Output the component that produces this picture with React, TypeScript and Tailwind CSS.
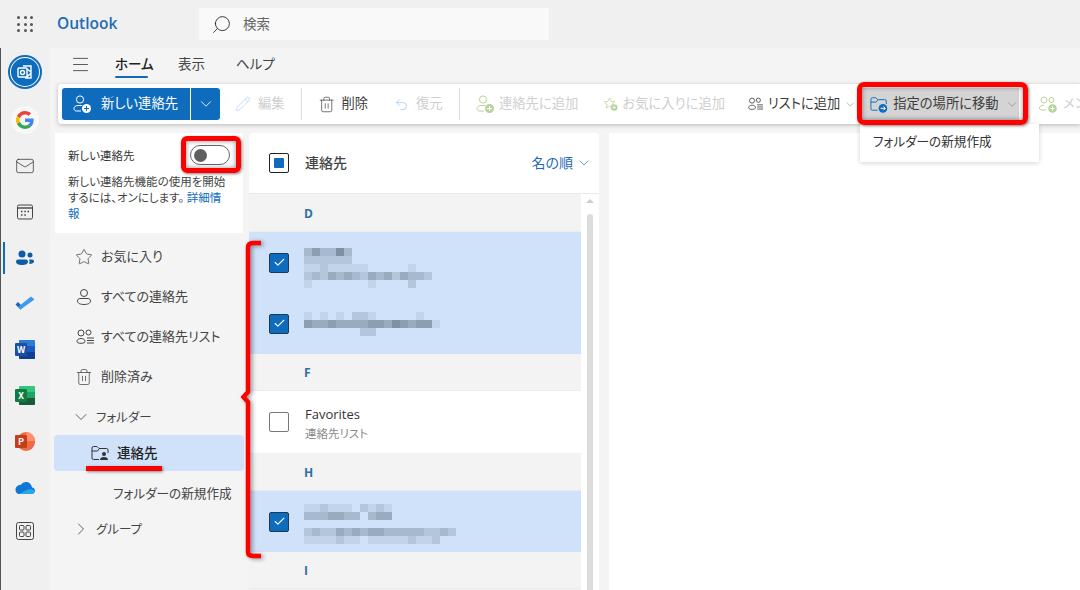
import React from "react";
import { ChevronDown, ChevronRight, Star, Trash2, Undo2, Pencil, Search, Menu, Mail, Check } from "lucide-react";

const FONT = "font-['Noto_Sans_CJK_JP','Noto_Sans',sans-serif] [font-feature-settings:'palt']";

const PersonAdd = ({ c = "#333", plus = "#0f6cbd", cross = "#fff" }: { c?: string; plus?: string; cross?: string }) => (
  <svg width="20" height="20" viewBox="0 0 20 20" fill="none">
    <circle cx="8" cy="5.5" r="3.6" stroke={c} />
    <path d="M9 17H4.5C3 17 2 16 2 14.6c0-1.900 1.700-3.100 4-3.100h4" stroke={c} />
    <circle cx="14.500" cy="14.500" r="4.500" fill={plus} />
    <path d="M14.500 12v5M12 14.500h5" stroke={cross} />
  </svg>
);

const StarAdd = ({ c = "#b9d29a" }: { c?: string }) => (
  <svg width="20" height="20" viewBox="0 0 20 20" fill="none">
    <path d="M8.500 2l2 4.600 5 .5-3.800 3.300 1.100 4.900-4.300-2.600-4.300 2.600 1.100-4.900L1.500 7.100l5-.5z" stroke={c} />
    <circle cx="14.500" cy="14.500" r="4.300" fill={c} />
    <path d="M14.500 12.300v4.400M12.300 14.500h4.400" stroke="#fff" />
  </svg>
);

const PeopleList = ({ c = "#444" }: { c?: string }) => (
  <svg width="20" height="20" viewBox="0 0 20 20" fill="none" stroke={c}>
    <circle cx="6" cy="6" r="3" />
    <path d="M2 14.500c0-2 1.600-3 4-3s4 1 4 3c0 1-1 1.800-4 1.800S2 15.500 2 14.500z" />
    <circle cx="13.500" cy="5.500" r="2.500" />
    <path d="M12 11h7M12 13.500h7M12 16h7" />
  </svg>
);

const PeopleAdd = ({ c = "#b9d29a" }: { c?: string }) => (
  <svg width="20" height="20" viewBox="0 0 20 20" fill="none" stroke={c}>
    <circle cx="6" cy="6" r="3" />
    <circle cx="13.500" cy="6" r="2.500" />
    <path d="M8 16H4c-1.500 0-2.500-.7-2.500-2 0-1.800 2-2.800 4.500-2.800" />
    <circle cx="14.500" cy="14.500" r="4.300" fill={c} stroke="none" />
    <path d="M14.500 12.300v4.400M12.300 14.500h4.400" stroke="#fff" />
  </svg>
);

const FolderBase = ({ children, c = "#444" }: { children: React.ReactNode; c?: string }) => (
  <svg width="20" height="20" viewBox="0 0 20 20" fill="none">
    <path d="M9 16.500H3.500A1.500 1.500 0 0 1 2 15V5a1.500 1.500 0 0 1 1.500-1.500H7L9 5.500h7.500A1.500 1.500 0 0 1 18 7v3M2 8h5.500L9 6" stroke={c} />
    {children}
  </svg>
);

const Mosaic = ({ rows, w = 8, h = 8 }: { rows: string[]; w?: number; h?: number }) => (
  <svg width={rows[0].length * w} height={rows.length * h} className="block">
    {rows.map((r, y) =>
      r.split("").map((ch, x) =>
        ch === "." ? null : <rect key={x + "-" + y} x={x * w} y={y * h} width={w} height={h} fill="#4a5a6b" opacity={Number(ch) / 10} />
      )
    )}
  </svg>
);

const Box = ({ checked, partial }: { checked?: boolean; partial?: boolean }) => (
  <div className={`flex h-5 w-5 shrink-0 items-center justify-center rounded-[2px] border ${checked ? "border-[#1c3a55] bg-[#0f6cbd]" : partial ? "border-[#222] bg-white" : "border-[#777] bg-white"}`}>
    {checked && <Check size={13} color="#fff" strokeWidth={2} />}
    {partial && <div className="h-[10px] w-[10px] rounded-[1px] bg-[#0f6cbd]" />}
  </div>
);

const RailIcon = ({ children, active }: { children: React.ReactNode; active?: boolean }) => (
  <div className="relative flex h-[46px] w-full items-center justify-center">
    {active && <div className="absolute left-[2px] top-[7px] h-[32px] w-[2px] bg-[#0f6cbd]" />}
    {children}
  </div>
);

const OfficeTile = ({ letter, bg, children }: { letter: string; bg: string; children: React.ReactNode }) => (
  <div className="relative h-[20px] w-[20px]">
    {children}
    <div className={`absolute left-0 top-[3px] flex h-[13px] w-[12px] items-center justify-center rounded-[1px] text-[9px] font-bold leading-none text-white ${bg}`}>{letter}</div>
  </div>
);

const NavRow = ({ icon, label }: { icon: React.ReactNode; label: string }) => (
  <div className="flex h-10 items-center text-[13px] text-[#444]">
    <div className="ml-[25px] flex w-[26px] items-center">{icon}</div>
    <span className="-translate-y-px">{label}</span>
  </div>
);

const Head = ({ t, h }: { t: string; h: string }) => (
  <div className={`flex items-center border-b border-[#ececec] pl-[55px] pt-[2px] text-[12px] font-bold text-[#2f6ea8] font-['Open_Sans',sans-serif] ${h}`}>{t}</div>
);

const Tool = ({ icon, label, off, ml, w, gap = "gap-[6px]", chev }: { icon: React.ReactNode; label: string; off?: boolean; ml: string; w?: string; gap?: string; chev?: boolean }) => (
  <div className={`flex shrink-0 items-center ${gap} ${ml} ${w ?? ""} text-[13.3px] ${off ? "text-[#cfcfcf]" : "text-[#3b3b3b]"}`}>
    {icon}
    <span className="-translate-y-px whitespace-nowrap">{label}</span>
    {chev && <ChevronDown size={15} strokeWidth={1} color="#777" className="ml-auto" />}
  </div>
);

export default function App() {
  return (
    <div className={`relative flex h-[590px] w-[1080px] flex-col overflow-hidden bg-[#f3f3f3] ${FONT}`}>
      {/* top bar */}
      <div className="flex h-12 shrink-0 items-center bg-[#f0f0f0]">
        <div className="ml-[17px] grid grid-cols-3 gap-[3.5px]">
          {Array.from({ length: 9 }).map((_, i) => (
            <div key={i} className="h-[3px] w-[3px] rounded-full bg-[#555]" />
          ))}
        </div>
        <div className="ml-[24px] w-[59px] text-[15.5px] font-semibold text-[#1f6cb5] font-['Open_Sans',sans-serif]">Outlook</div>
        <div className="ml-[83px] flex h-8 w-[350px] items-center bg-[#f9f9f9] pl-[12px] text-[13.5px] text-[#666]">
          <Search size={21} strokeWidth={1} color="#222" className="-scale-x-100" />
          <span className="ml-[11px] -translate-y-px">検索</span>
        </div>
      </div>

      <div className="flex min-h-0 flex-1">
        {/* rail */}
        <div className="flex w-[50px] shrink-0 flex-col items-center border-l border-[#555] bg-[#f0f0f0] pr-px">
          <div className="flex h-[48px] items-center justify-center">
            <div className="flex h-[34px] w-[34px] items-center justify-center rounded-full border-2 border-[#0f6cbd] bg-white p-[1px]">
              <div className="flex h-full w-full items-center justify-center rounded-full bg-[#0f6cbd]">
                <svg width="18" height="18" viewBox="0 0 18 18" fill="none" stroke="#fff" strokeWidth="1.4">
                  <rect x="2" y="5" width="9" height="9" rx="1" />
                  <circle cx="6.500" cy="9.500" r="2" />
                  <path d="M7 3h8v12H9M11 6l4 3M11 14l4-4" />
                </svg>
              </div>
            </div>
          </div>
          <div className="flex h-[47px] items-center justify-center">
            <div className="flex h-7 w-7 items-center justify-center rounded-full bg-[#f8f8f8]">
              <svg width="18" height="18" viewBox="0 0 48 48">
                <path fill="#EA4335" d="M24 9.500c3.500 0 6.700 1.200 9.200 3.600l6.900-6.900C35.900 2.400 30.500 0 24 0 14.600 0 6.500 5.400 2.600 13.200l8 6.200C12.500 13.700 17.800 9.500 24 9.500z" />
                <path fill="#4285F4" d="M47 24.500c0-1.600-.1-3.100-.4-4.500H24v9h12.900c-.6 3-2.200 5.500-4.700 7.200l7.700 6c4.500-4.200 7.100-10.300 7.100-17.700z" />
                <path fill="#FBBC05" d="M10.500 28.600A14.500 14.500 0 0 1 10.500 19.400l-8-6.200a24 24 0 0 0 0 21.600z" />
                <path fill="#34A853" d="M24 48c6.500 0 11.900-2.100 15.900-5.800l-7.700-6c-2.200 1.400-5 2.300-8.200 2.300-6.200 0-11.500-4.200-13.400-9.900l-8 6.200C6.500 42.600 14.600 48 24 48z" />
              </svg>
            </div>
          </div>
          <RailIcon><Mail size={20} strokeWidth={1} color="#444" /></RailIcon>
          <RailIcon>
            <svg width="18" height="18" viewBox="0 0 18 18" fill="none" stroke="#444">
              <rect x="1.500" y="2" width="15" height="14" rx="1.500" />
              <path d="M1.500 5h15" strokeWidth="1.4" />
              <path d="M5 8.500h1.500M8.300 8.500h1.500M11.600 8.500h1.500M5 12h1.500M8.300 12h1.500" strokeWidth="1.4" />
            </svg>
          </RailIcon>
          <RailIcon active>
            <svg width="20" height="20" viewBox="0 0 20 20" fill="#0f5ba8">
              <circle cx="7" cy="6" r="3.500" />
              <path d="M1 13.500c0-1.200 1-2 2-2h8c1 0 2 .8 2 2 0 2.500-2.500 3.500-6 3.500s-6-1-6-3.500z" />
              <circle cx="15" cy="7" r="2.500" />
              <path d="M14 16c.7-1 .8-3 0-4.500h3c1 0 2 .7 2 1.800 0 1.700-2 2.700-5 2.700z" />
            </svg>
          </RailIcon>
          <RailIcon>
            <svg width="20" height="20" viewBox="0 0 20 20">
              <path d="M0.500 10.500l2.500-2.500 5 5-2.500 2.500z" fill="#1f5fc0" />
              <path d="M5.500 15.500l-2.500-2.500L16 2.500l3.500 3z" fill="#3f9be8" />
            </svg>
          </RailIcon>
          <RailIcon>
            <OfficeTile letter="W" bg="bg-[#1a4fa8]">
              <div className="absolute right-0 top-0 h-[19px] w-[16px] overflow-hidden rounded-[1px] bg-[#2b7cd3]">
                <div className="mt-[6px] h-[6px] bg-[#185abd]" />
                <div className="h-[7px] bg-[#103f91]" />
              </div>
            </OfficeTile>
          </RailIcon>
          <RailIcon>
            <OfficeTile letter="X" bg="bg-[#107c41]">
              <div className="absolute right-0 top-0 h-[19px] w-[16px] overflow-hidden rounded-[1px] bg-[#33c481]">
                <div className="mt-[6px] h-[6px] bg-[#21a366]" />
                <div className="h-[7px] bg-[#185c37]" />
              </div>
            </OfficeTile>
          </RailIcon>
          <RailIcon>
            <OfficeTile letter="P" bg="bg-[#c43e1c]">
              <div className="absolute right-0 top-0 h-[19px] w-[18px] rounded-full bg-[#ed6c47]">
                <div className="absolute right-0 top-0 h-[9px] w-[9px] rounded-tr-full bg-[#ff8f6b]" />
              </div>
            </OfficeTile>
          </RailIcon>
          <RailIcon>
            <svg width="20" height="14" viewBox="0 0 20 14">
              <path d="M4 13h12c2.200 0 4-1.300 4-3.300 0-1.800-1.400-3-3-3.200C16.500 3 13.800 1 11 1 8.800 1 7 2.100 6 3.800 3 3.800.5 6 .5 9c0 2.300 1.500 4 3.500 4z" fill="#0f78d4" />
              <path d="M4 13h12c2.200 0 4-1.300 4-3.300-3-2-6-2-9-.5l-7 3.800z" fill="#28a8ea" />
            </svg>
          </RailIcon>
          <div className="-mt-[3px]">
            <RailIcon>
              <svg width="20" height="20" viewBox="0 0 20 20" fill="none" stroke="#444">
                <rect x="1.500" y="1.500" width="17" height="17" rx="2" />
                <rect x="4.500" y="4.500" width="4.500" height="4.500" rx="1" />
                <rect x="11" y="4.500" width="4.500" height="4.500" rx="1" />
                <rect x="4.500" y="11" width="4.500" height="4.500" rx="1" />
                <rect x="11" y="11" width="4.500" height="4.500" rx="1" />
              </svg>
            </RailIcon>
          </div>
        </div>

        {/* main */}
        <div className="flex min-w-0 flex-1 flex-col bg-[#f4f4f4]">
          {/* tabs */}
          <div className="flex h-9 shrink-0 items-center text-[13.5px] text-[#444]">
            <Menu size={21} strokeWidth={1} color="#444" className="ml-[20px] -translate-y-[2px]" />
            <div className="relative ml-[24px] w-[33px] whitespace-nowrap font-medium text-[#222]">
              <span className="relative -top-[3px]">ホーム</span>
              <div className="absolute bottom-[-2px] left-0 right-0 h-[2.5px] rounded bg-[#0f6cbd]" />
            </div>
            <div className="relative -top-[3px] ml-[30px]">表示</div>
            <div className="relative -top-[3px] ml-[31px]">ヘルプ</div>
          </div>

          {/* toolbar */}
          <div className="ml-2 flex h-10 shrink-0 items-center overflow-hidden rounded-l bg-white pl-1 shadow-[0_1px_4px_rgba(0,0,0,0.25)]">
            <div className="flex h-8 w-[158px] shrink-0 overflow-hidden rounded-[3px] bg-[#0f6cbd] text-[13.3px] text-white">
              <div className="flex w-[129px] items-center border-r border-white pl-[10px]">
                <PersonAdd c="#fff" plus="#fff" cross="#0f6cbd" />
                <span className="ml-[9px] -translate-y-px">新しい連絡先</span>
              </div>
              <div className="flex flex-1 items-center justify-center">
                <ChevronDown size={18} strokeWidth={1.2} color="#fff" />
              </div>
            </div>
            <Tool ml="ml-[15px]" w="w-[50px]" off gap="gap-[7px]" icon={<Pencil size={16} strokeWidth={1} color="#a9cdee" />} label="編集" />
            <div className="ml-[16px] h-8 w-px shrink-0 bg-[#ddd]" />
            <Tool ml="ml-[16px]" w="w-[50px]" gap="gap-[6px]" icon={<Trash2 size={19} strokeWidth={1} color="#444" />} label="削除" />
            <Tool ml="ml-[26px]" w="w-[49px]" off gap="gap-[7px]" icon={<Undo2 size={15} strokeWidth={1} color="#8cc0ee" />} label="復元" />
            <div className="ml-[16px] h-8 w-px shrink-0 bg-[#ddd]" />
            <Tool ml="ml-[15px]" w="w-[104px]" off gap="gap-[4px]" icon={<PersonAdd c="#b9d29a" plus="#b9d29a" />} label="連絡先に追加" />
            <Tool ml="ml-[24px]" w="w-[122px]" off gap="gap-[4px]" icon={<StarAdd />} label="お気に入りに追加" />
            <Tool ml="ml-[22px]" w="w-[110px]" gap="gap-[4px]" chev icon={<PeopleList />} label="リストに追加" />
            <div className="ml-[4px] flex h-8 w-[158px] shrink-0 items-center bg-[#d4d4d4] pl-2 text-[13.3px] text-[#3b3b3b]">
              <FolderBase c="#0f6cbd">
                <circle cx="14.500" cy="14.500" r="4.500" fill="#0f6cbd" />
                <path d="M12 14.500h5M15 12.500l2 2-2 2" stroke="#fff" />
              </FolderBase>
              <span className="ml-[5px] -translate-y-px whitespace-nowrap">指定の場所に移動</span>
              <ChevronDown size={15} strokeWidth={1} color="#777" className="ml-[6px]" />
            </div>
            <Tool ml="ml-[19px]" off gap="gap-[5px]" icon={<PeopleAdd />} label="メンバー" />
          </div>

          {/* content */}
          <div className="flex min-h-0 flex-1 pt-[9px]">
            {/* nav */}
            <div className="flex w-[199px] shrink-0 flex-col">
              <div className="ml-[5px] h-[100px] w-[188px] shrink-0 bg-white pl-[13px] pt-[11px]">
                <div className="text-[11.5px] leading-[22px] text-[#333]">新しい連絡先</div>
                <div className="mt-[7px] whitespace-nowrap text-[11.5px] leading-[16px] text-[#444]">
                  新しい連絡先機能の使用を開始
                  <br />
                  するには、オンにします。 <span className="text-[#0f6cbd]">詳細情</span>
                  <br />
                  <span className="text-[#0f6cbd]">報</span>
                </div>
              </div>
              <div className="mt-[4px] flex flex-col">
                <NavRow icon={<Star size={18} strokeWidth={1} color="#444" />} label="お気に入り" />
                <NavRow
                  icon={
                    <svg width="18" height="18" viewBox="0 0 18 18" fill="none" stroke="#444">
                      <circle cx="9" cy="5" r="3.500" />
                      <path d="M2.500 13c0-1.500 1.200-2.500 2.500-2.500h8c1.300 0 2.500 1 2.500 2.500 0 2.500-3 3.500-6.500 3.500S2.500 15.500 2.500 13z" />
                    </svg>
                  }
                  label="すべての連絡先"
                />
                <NavRow icon={<PeopleList />} label="すべての連絡先リスト" />
                <NavRow icon={<Trash2 size={18} strokeWidth={1} color="#444" />} label="削除済み" />
                <div className="flex h-10 items-center text-[12.5px] text-[#444]">
                  <ChevronDown size={20} strokeWidth={1} color="#444" className="ml-[21px]" />
                  <span className="ml-[5px]">フォルダー</span>
                </div>
                <div className="-mt-[2px] ml-[4px] flex h-9 w-[190px] items-center rounded-[4px] bg-[#cfe2f9] text-[13.5px] font-medium text-[#222]">
                  <div className="ml-[36px]">
                    <FolderBase c="#333">
                      <circle cx="14" cy="11" r="2" fill="#333" />
                      <path d="M10 17c0-2 1.500-3 4-3s4 1 4 3z" fill="#333" />
                    </FolderBase>
                  </div>
                  <span className="ml-[7px] -translate-y-px">連絡先</span>
                </div>
                <div className="flex h-10 items-center pl-[63px] text-[12.6px] text-[#444]">
                  <span className="translate-y-[2px]">フォルダーの新規作成</span>
                </div>
                <div className="flex h-9 items-center text-[12.5px] text-[#444]">
                  <ChevronRight size={20} strokeWidth={1} color="#444" className="ml-[21px]" />
                  <span className="ml-[5px]">グループ</span>
                </div>
              </div>
            </div>

            {/* list */}
            <div className="flex w-[350px] shrink-0 flex-col overflow-hidden rounded-t bg-white">
              <div className="flex h-[61px] shrink-0 items-center border-b border-[#eaeaea] pl-[20px] pr-[7px]">
                <Box partial />
                <span className="ml-[16px] -translate-y-px text-[14px] font-medium text-[#444]">連絡先</span>
                <span className="ml-auto -translate-y-px text-[14px] text-[#1f6cb5]">名の順</span>
                <ChevronDown size={16} strokeWidth={1} color="#1f6cb5" className="ml-[3px]" />
              </div>
              <div className="flex min-h-0 flex-1">
                <div className="flex w-[332px] shrink-0 flex-col bg-[#f3f3f3]">
                  <Head t="D" h="h-[38px] shrink-0" />
                  <div className="flex h-[122px] shrink-0 flex-col bg-[#cfe2f9] pl-[20px]">
                    <div className="flex h-[61px] items-center">
                      <Box checked />
                      <div className="ml-[15px] mt-[10px]">
                        <Mosaic rows={["3533630.........", "2222220.........", "11211111.....1..", "2324343243424332", "1.......1....2.."]} />
                      </div>
                    </div>
                    <div className="flex h-[61px] items-center">
                      <Box checked />
                      <div className="ml-[15px]">
                        <Mosaic rows={["1.1.1.221.....1..", "54454444554654551", ".......22........"]} />
                      </div>
                    </div>
                  </div>
                  <Head t="F" h="h-[37px] shrink-0" />
                  <div className="flex h-[62px] shrink-0 items-center bg-white pl-[20px]">
                    <Box />
                    <div className="ml-[16px] mt-[3px]">
                      <div className="text-[13px] leading-[18px] text-[#333] font-['Open_Sans',sans-serif]">Favorites</div>
                      <div className="text-[11.5px] leading-[20px] text-[#888]">連絡先リスト</div>
                    </div>
                  </div>
                  <Head t="H" h="h-[38px] shrink-0" />
                  <div className="flex h-[61px] shrink-0 items-center bg-[#cfe2f9] pl-[20px]">
                    <Box checked />
                    <div className="ml-[15px] mt-[4px]">
                      <Mosaic rows={["112111.2121........", "3334433.344........", "...................", "2322434344333332232", "1111211.1111121120."]} />
                    </div>
                  </div>
                  <Head t="I" h="h-[37px] shrink-0" />
                </div>
                <div className="flex flex-1 flex-col items-center pt-[5px]">
                  <div className="h-0 w-0 border-x-[4px] border-b-[4px] border-x-transparent border-b-[#ccc]" />
                  <div className="mt-[11px] w-[6px] flex-1 rounded-t-[3px] bg-[#dcdcdc]" />
                </div>
              </div>
            </div>

            {/* reading pane */}
            <div className="ml-[10px] flex-1 bg-white" />
          </div>
        </div>
      </div>

      {/* dropdown menu */}
      <div className="absolute left-[860px] top-[124px] flex h-[38px] w-[179px] items-center bg-white pl-[13px] text-[12.6px] text-[#333] shadow-[0_1px_5px_rgba(0,0,0,0.18)]">
        <span className="-translate-y-[2px]">フォルダーの新規作成</span>
      </div>

      {/* toggle */}
      <div className="absolute left-[190px] top-[145px] flex h-[20px] w-[40px] items-center rounded-full border border-[#666] bg-white pl-[3px]">
        <div className="h-[13px] w-[13px] rounded-full bg-[#5f5f5f]" />
      </div>

      {/* red annotations */}
      <div className="absolute left-[181px] top-[136px] h-[37px] w-[60px] rounded-[6px] border-[5px] border-[#ff0000] shadow-[1px_1px_3px_rgba(0,0,0,0.5),inset_0_0_5px_rgba(0,0,0,0.45)]" />
      <div className="absolute left-[857px] top-[82px] h-[43px] w-[171px] rounded-[7px] border-[5px] border-[#ff0000] shadow-[1px_1px_3px_rgba(0,0,0,0.5),inset_0_0_5px_rgba(0,0,0,0.45)]" />
      <div className="absolute left-[86px] top-[466px] h-[5px] w-[76px] bg-[#ff0000] shadow-[1px_1px_3px_rgba(0,0,0,0.45)]" />
      <svg width="26" height="330" viewBox="0 0 26 330" className="absolute left-[238px] top-[234px] drop-shadow-[2px_1px_2px_rgba(0,0,0,0.4)]" fill="none">
        <path d="M23 9H15Q10 9 10 14V158L5.500 163L10 168V318Q10 322 15 322H23" stroke="#ff0000" strokeWidth="4.500" />
      </svg>
    </div>
  );
}
